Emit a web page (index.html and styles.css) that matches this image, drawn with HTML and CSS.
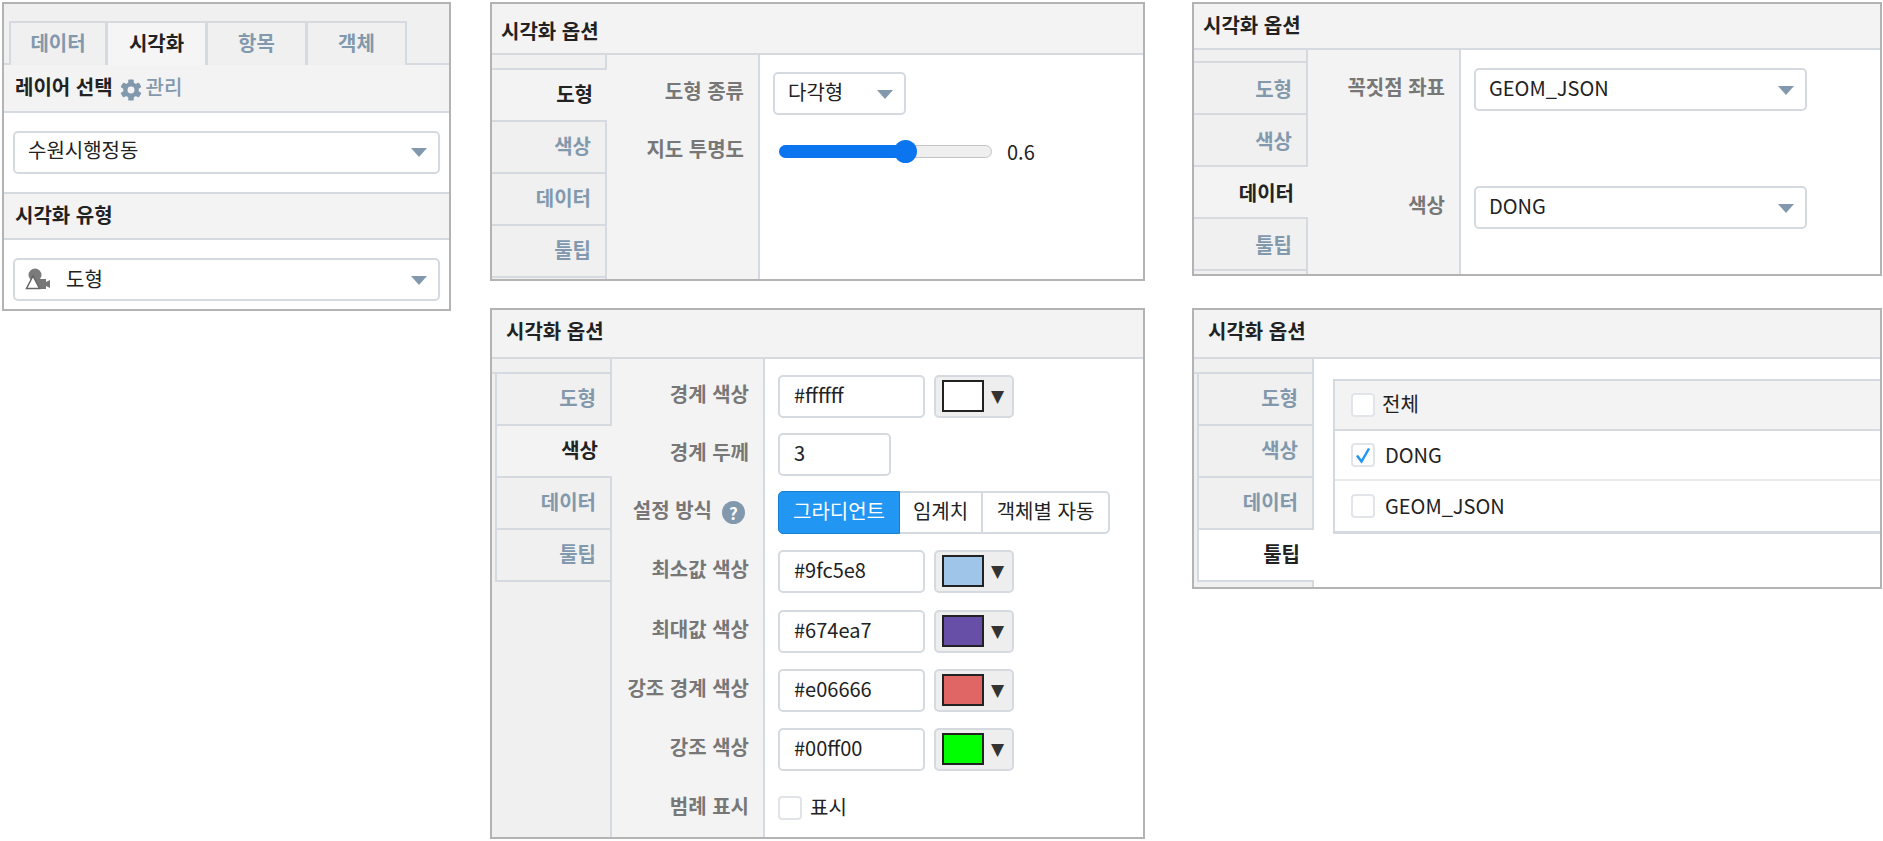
FILE: index.html
```html
<!DOCTYPE html>
<html lang="ko">
<head>
<meta charset="utf-8">
<title>시각화 옵션</title>
<link rel="stylesheet" href="styles.css">
</head>
<body>
<div class="page">
  <div class="col col-a">
    <section class="panel panel-side">
      <div class="toptabs">
        <div class="toptab">데이터</div>
        <div class="toptab toptab-on">시각화</div>
        <div class="toptab">항목</div>
        <div class="toptab">객체</div>
      </div>
      <div class="sec-head sec-first">레이어 선택
        <span class="manage">
          <svg class="gear" viewBox="0 0 24 24"><g fill="#8299ad"><rect x="9" y="0.500" width="6" height="23" rx="1"/><rect x="9" y="0.500" width="6" height="23" rx="1" transform="rotate(60 12 12)"/><rect x="9" y="0.500" width="6" height="23" rx="1" transform="rotate(120 12 12)"/><circle cx="12" cy="12" r="8.500"/></g><circle cx="12" cy="12" r="3.800" fill="#f3f3f3"/></svg>관리</span>
      </div>
      <div class="sec-body"><div class="select select-wide select-lift">수원시행정동<i class="caret"></i></div></div>
      <div class="sec-head sec-line">시각화 유형</div>
      <div class="sec-body sec-last"><div class="select select-wide select-icon">
        <svg class="shape" viewBox="0 0 26 24"><circle cx="10" cy="7" r="6.500" fill="#7b7b7b"/><rect x="11" y="11" width="10" height="10" fill="#777"/><path d="M21 14l4-2v8l-4-2z" fill="#777"/><path d="M8 8L1.500 20.500h13z" fill="#fff" stroke="#666" stroke-width="1.500"/></svg>
        <span class="shape-label">도형</span><i class="caret"></i></div></div>
    </section>
  </div>

  <div class="col col-b">
    <section class="panel panel-short">
      <h2 class="title">시각화 옵션</h2>
      <div class="body">
        <div class="tabs">
          <div class="stub"></div>
          <div class="tab tab-on">도형</div>
          <div class="tab">색상</div>
          <div class="tab">데이터</div>
          <div class="tab">툴팁</div>
          <div class="stub-end"></div>
        </div>
        <div class="form form-shape">
          <div class="row row-first"><div class="lab">도형 종류</div><div class="val"><div class="select select-small">다각형<i class="caret"></i></div></div></div>
          <div class="row"><div class="lab">지도 투명도</div><div class="val"><div class="slider"><span class="fill"></span><span class="knob"></span></div><span class="slider-value">0.6</span></div></div>
          <div class="row row-fill"><div class="lab"></div><div class="val"></div></div>
        </div>
      </div>
    </section>

    <section class="panel panel-tall">
      <h2 class="title title-raised">시각화 옵션</h2>
      <div class="body">
        <div class="tabs tabs-inset">
          <div class="stub"></div>
          <div class="tab">도형</div>
          <div class="tab tab-on">색상</div>
          <div class="tab">데이터</div>
          <div class="tab">툴팁</div>
          <div class="tabs-fill"></div>
        </div>
        <div class="form form-color">
          <div class="row row-first"><div class="lab">경계 색상</div><div class="val"><div class="input">#ffffff</div><div class="swatch-btn"><span class="swatch sw-white"></span><span class="sw-arrow">▼</span></div></div></div>
          <div class="row"><div class="lab">경계 두께</div><div class="val"><div class="input input-small">3</div></div></div>
          <div class="row"><div class="lab">설정 방식<span class="help">?</span></div><div class="val"><div class="btn-group"><span class="btn btn-on">그라디언트</span><span class="btn btn-mid">임계치</span><span class="btn btn-last">객체별 자동</span></div></div></div>
          <div class="row row-tall"><div class="lab">최소값 색상</div><div class="val"><div class="input">#9fc5e8</div><div class="swatch-btn"><span class="swatch sw-blue"></span><span class="sw-arrow">▼</span></div></div></div>
          <div class="row row-tall"><div class="lab">최대값 색상</div><div class="val"><div class="input">#674ea7</div><div class="swatch-btn"><span class="swatch sw-purple"></span><span class="sw-arrow">▼</span></div></div></div>
          <div class="row"><div class="lab">강조 경계 색상</div><div class="val"><div class="input">#e06666</div><div class="swatch-btn"><span class="swatch sw-red"></span><span class="sw-arrow">▼</span></div></div></div>
          <div class="row row-tall"><div class="lab">강조 색상</div><div class="val"><div class="input">#00ff00</div><div class="swatch-btn"><span class="swatch sw-green"></span><span class="sw-arrow">▼</span></div></div></div>
          <div class="row row-fill"><div class="lab">범례 표시</div><div class="val"><span class="check"></span><span class="check-text">표시</span></div></div>
        </div>
      </div>
    </section>
  </div>

  <div class="col col-c">
    <section class="panel panel-data">
      <h2 class="title title-tight">시각화 옵션</h2>
      <div class="body">
        <div class="tabs tabs-data">
          <div class="stub stub-tight"></div>
          <div class="tab">도형</div>
          <div class="tab">색상</div>
          <div class="tab tab-on">데이터</div>
          <div class="tab">툴팁</div>
          <div class="stub-end"></div>
        </div>
        <div class="form form-data">
          <div class="row row-first"><div class="lab">꼭짓점 좌표</div><div class="val"><div class="select select-mid">GEOM_JSON<i class="caret"></i></div></div></div>
          <div class="row row-gap"><div class="lab"></div><div class="val"></div></div>
          <div class="row"><div class="lab">색상</div><div class="val"><div class="select select-mid">DONG<i class="caret"></i></div></div></div>
          <div class="row row-fill"><div class="lab"></div><div class="val"></div></div>
        </div>
      </div>
    </section>

    <section class="panel panel-tip">
      <h2 class="title title-raised">시각화 옵션</h2>
      <div class="body">
        <div class="tabs tabs-inset tabs-white">
          <div class="stub"></div>
          <div class="tab">도형</div>
          <div class="tab">색상</div>
          <div class="tab">데이터</div>
          <div class="tab tab-on">툴팁</div>
          <div class="stub-end"></div>
        </div>
        <div class="tip-content">
          <div class="table">
            <div class="t-row t-head"><span class="check"></span><span class="t-all">전체</span></div>
            <div class="t-row t-divide"><span class="check check-on"><svg viewBox="0 0 20 20"><path d="M4 10.500l4.500 6L16 3.500" fill="none" stroke="#2196f3" stroke-width="2.500"/></svg></span><span class="t-text">DONG</span></div>
            <div class="t-row"><span class="check"></span><span class="t-text">GEOM_JSON</span></div>
          </div>
        </div>
      </div>
    </section>
  </div>
</div>
</body>
</html>
```

FILE: styles.css
```css
* { box-sizing: border-box; }
html, body { margin: 0; padding: 0; background: #fff; }
body {
  font-family: "Noto Sans CJK KR", "Noto Sans", sans-serif;
  font-size: 20px;
  color: #222;
  width: 1883px;
  height: 841px;
  overflow: hidden;
}
.page { display: flex; align-items: flex-start; padding: 2px 0 0 2px; }
.col { display: flex; flex-direction: column; }
.col-a { width: 449px; margin-right: 39px; }
.col-b { width: 655px; margin-right: 47px; gap: 27px; }
.col-c { width: 690px; gap: 32px; }

.panel { border: 2px solid #b3b3b3; background: #fff; display: flex; flex-direction: column; }
.panel-side { height: 309px; }
.panel-short { height: 279px; }
.panel-tall { height: 531px; }
.panel-data { height: 274px; }
.panel-tip { height: 281px; }

/* side panel */
.toptabs { display: flex; height: 61px; padding: 17px 0 0 5px; background: #f0f0f0; border-bottom: 2px solid #d5dae0; }
.toptab {
  width: 100px; height: 44px; border: 2px solid #d5dae0; border-left-width: 1px; border-bottom: 0;
  display: flex; align-items: center; justify-content: center; padding-bottom: 4px;
  font-weight: 700; color: #8299ad; background: #f0f0f0;
}
.toptab:first-child { border-left-width: 2px; width: 98px; }
.toptab-on { color: #222; background: #f5f5f5; height: 46px; margin-bottom: -2px; padding-bottom: 6px; }
.sec-head {
  height: 48px; background: #f3f3f3; border-bottom: 2px solid #d5dae0;
  display: flex; align-items: center; padding: 0 0 3px 11px; font-weight: 700; color: #222;
}
.sec-line { border-top: 2px solid #d5dae0; }
.manage { display: inline-flex; align-items: center; color: #8299ad; margin-left: 7px; font-weight: 500; }
.gear { width: 22px; height: 22px; margin-top: 6px; margin-right: 4px; }
.sec-body { padding: 18px 9px 0; height: 79px; }
.sec-last { height: 69px; }

/* controls */
.select {
  height: 43px; border: 2px solid #d5dae0; border-radius: 5px; background: #fff;
  display: flex; align-items: center; padding: 0 13px 3px; position: relative; color: #222;
}
.select-lift { padding-bottom: 6px; }
.select-wide { width: 427px; }
.select-small { width: 133px; }
.select-mid { width: 333px; }
.select-icon { padding-left: 10px; }
.caret {
  width: 0; height: 0; border-left: 8.5px solid transparent; border-right: 8.5px solid transparent;
  border-top: 9px solid #8299ad; margin-left: auto; margin-right: -2px; margin-top: 5px;
}
.shape { width: 26px; height: 24px; margin-top: 3px; }
.shape-label { margin-left: 15px; }

.title {
  margin: 0; height: 51px; padding: 4px 0 0 9px; background: #f3f3f3; border-bottom: 2px solid #d5dae0;
  display: flex; align-items: center; font-size: 20px; font-weight: 700; color: #222;
}
.title-raised { height: 49px; padding: 0 0 6px 14px; }
.title-tight { height: 46px; padding: 0 0 3px 9px; }
.body { flex: 1; display: flex; min-height: 0; background: #f0f0f0; }

/* vertical tabs */
.tabs { width: 115px; flex: none; display: flex; flex-direction: column; background: #f0f0f0; }
.tabs-inset { width: 120px; padding-left: 3px; }
.tabs-data { width: 114px; }
.stub { height: 15px; border-right: 2px solid #d5dae0; border-bottom: 2px solid #d5dae0; flex: none; }
.stub-tight { height: 13px; }
.stub-end { flex: 1; border-top: 2px solid #d5dae0; border-right: 2px solid #d5dae0; margin-top: -2px; }
.tabs-fill { flex: 1; border-right: 2px solid #d5dae0; }
.tabs-inset .stub { margin-left: -3px; }
.tab {
  height: 52px; flex: none; display: flex; align-items: center; justify-content: flex-end;
  padding: 0 14px 4px 0; font-weight: 700; color: #8299ad;
  border-right: 2px solid #d5dae0; border-bottom: 2px solid #d5dae0;
}
.tabs-data .tab { padding-bottom: 0; }
.tabs-inset .tab { border-left: 2px solid #d5dae0; }
.tab-on { color: #222; background: #f3f3f3; border-right: 0; padding-right: 14px; }
.tabs-white .tab-on { background: #fff; }

/* form */
.form { flex: 1; display: flex; flex-direction: column; min-width: 0; background: #fff; }
.row { display: flex; height: 58px; flex: none; }
.row-tall { height: 60px; }
.row-gap { height: 60px; }
.row-fill { flex: 1; }
.row-first { height: 66px; }
.row-first .lab, .row-first .val { padding-top: 8px; }
.form-shape .row-first { height: 67px; }
.form-shape .row-first .lab, .form-shape .row-first .val { padding-top: 9px; }
.form-data .row-first { height: 68px; }
.form-data .row-first .lab, .form-data .row-first .val { padding-top: 10px; }
.lab {
  width: 153px; flex: none; background: #f3f3f3; border-right: 2px solid #d5dae0;
  display: flex; align-items: center; justify-content: flex-end; padding: 0 14px 5px 0;
  font-weight: 700; color: #777; white-space: nowrap;
}
.val { flex: 1; display: flex; align-items: center; padding-left: 13px; min-width: 0; background: #fff; }
.input {
  width: 147px; height: 43px; border: 2px solid #d5dae0; border-radius: 5px; padding: 0 14px 3px; background: #fff;
  display: flex; align-items: center; color: #222;
}
.input-small { width: 113px; }
.swatch-btn {
  width: 80px; height: 43px; margin-left: 9px; border: 2px solid #d5dae0; border-radius: 5px; background: #eee;
  display: flex; align-items: center; padding-left: 6px;
}
.swatch { width: 42px; height: 32px; border: 2px solid #222; display: block; }
.sw-white { background: #fff; }
.sw-blue { background: #9fc5e8; }
.sw-purple { background: #674ea7; }
.sw-red { background: #e06666; }
.sw-green { background: #00ff00; }
.sw-arrow { color: #333; font-family: "DejaVu Sans", sans-serif; font-size: 17px; margin-left: 7px; line-height: 1; }

.help {
  width: 23px; height: 23px; margin: 5px 4px 0 10px; flex: none; border-radius: 50%; background: #8299ad;
  display: flex; align-items: center; justify-content: center;
  color: #fff; font-size: 17px; font-weight: 700; line-height: 23px; overflow: visible;
}

.btn-group { display: flex; width: 332px; height: 43px; }
.btn {
  display: flex; align-items: center; justify-content: center; height: 43px; background: #fff;
  border: 2px solid #d5dae0; border-left: 0; color: #222; padding-bottom: 3px; white-space: nowrap;
}
.btn-on { width: 122px; background: #2196f3; border: 1px solid #1a7fd0; border-radius: 5px 0 0 5px; color: #fff; }
.btn-mid { width: 83px; }
.btn-last { width: 127px; border-radius: 0 5px 5px 0; }

.slider {
  width: 213px; height: 13px; border: 1px solid #c4c4c4; border-radius: 7px; background: #efefef; position: relative; margin-left: 6px; flex: none;
}
.fill { display: block; width: 126px; height: 13px; margin: -1px; background: #0b75f0; border-radius: 7px 0 0 7px; }
.knob { position: absolute; left: 114px; top: -6px; width: 23px; height: 23px; border-radius: 50%; background: #0b75f0; }
.slider-value { margin-left: 15px; }

.check {
  width: 24px; height: 24px; border: 2px solid #e1e4e8; border-radius: 4px; background: #fff; display: block; flex: none;
}
.check svg { display: block; width: 20px; height: 20px; }
.check-text { margin-left: 8px; color: #222; padding-bottom: 3px; }

/* tooltip table */
.tip-content { flex: 1; background: #fff; padding: 20px 0 0 19px; min-width: 0; }
.table { border-left: 2px solid #d5dae0; border-top: 2px solid #d5dae0; border-bottom: 3px solid #d5dae0; background: #fff; }
.t-row { height: 50px; display: flex; align-items: center; padding-left: 16px; }
.t-head { background: #f3f3f3; border-bottom: 2px solid #d5dae0; }
.t-divide { border-bottom: 2px solid #e8eaed; }
.t-all { margin-left: 7px; padding-bottom: 4px; }
.t-text { margin-left: 10px; padding-bottom: 2px; }
```
